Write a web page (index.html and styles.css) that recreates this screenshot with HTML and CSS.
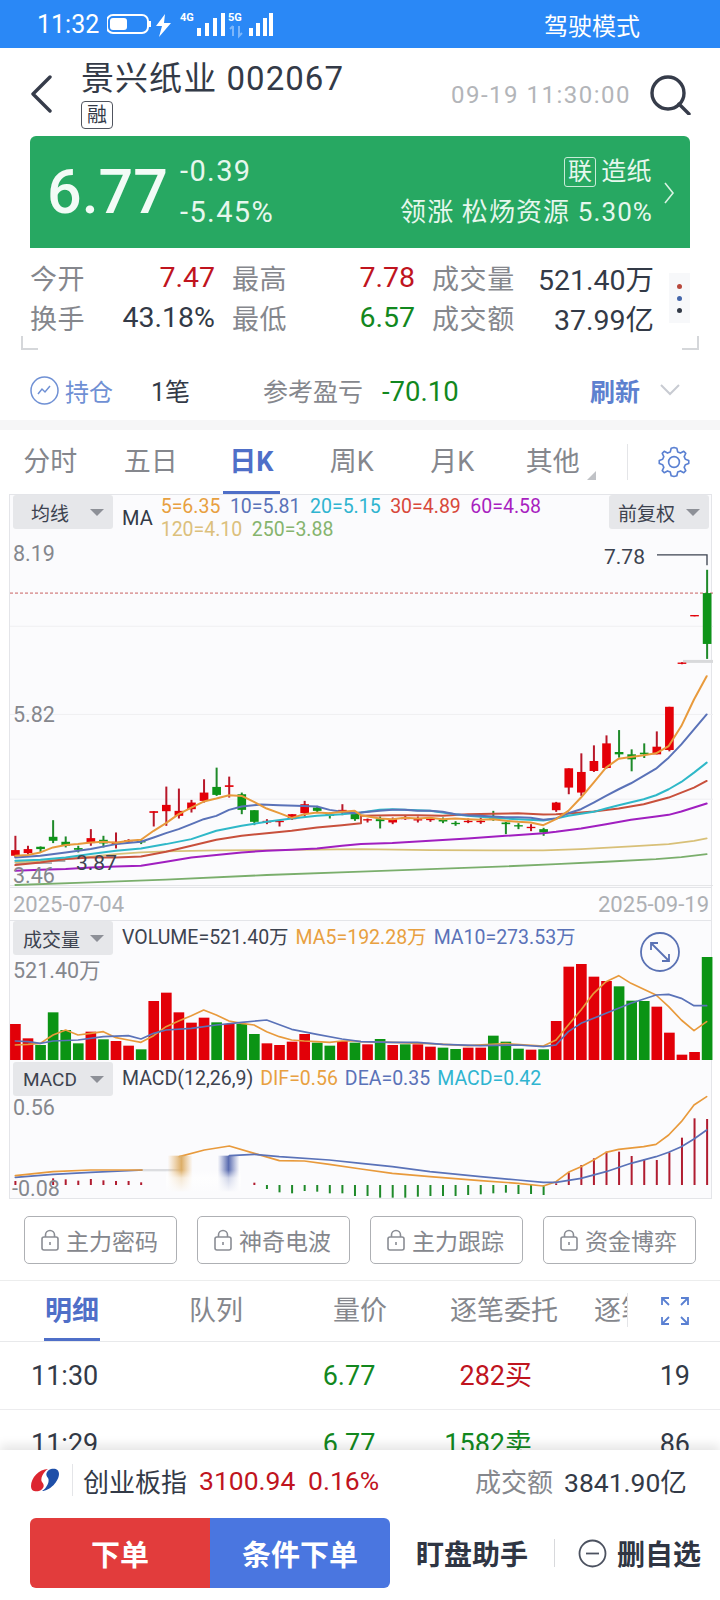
FILE: index.html
```html
<!DOCTYPE html>
<html lang="zh-CN">
<head>
<meta charset="utf-8">
<title>景兴纸业 002067</title>
<link rel="stylesheet" href="styles.css">
</head>
<body>
<div class="page">
  <div class="status">
    <span class="clock">11:32</span>
    <svg class="status-icons" width="170" height="30" viewBox="0 0 170 30">
      <rect x="0" y="5" width="41" height="18" rx="6" class="s-line"/>
      <rect x="3" y="8" width="17" height="12" rx="3" class="s-fill"/>
      <rect x="42" y="11" width="2" height="6" class="s-fill"/>
      <path d="M58 4 L49 16 H55 L52 27 L64 13 H57 Z" class="s-fill"/>
      <text x="73" y="11" class="s-tiny">4G</text>
      <rect x="90" y="18" width="4" height="8" class="s-fill"/><rect x="98" y="13" width="4" height="13" class="s-fill"/><rect x="106" y="8" width="4" height="18" class="s-fill"/><rect x="114" y="3" width="4" height="23" class="s-fill"/>
      <text x="121" y="11" class="s-tiny">5G</text>
      <path d="M126 26 V16 M123 19 L126 16 M132 16 V26 L135 23" class="s-dim"/>
      <rect x="142" y="18" width="4" height="8" class="s-fill"/><rect x="149" y="13" width="4" height="13" class="s-fill"/><rect x="156" y="8" width="4" height="18" class="s-fill"/><rect x="162" y="3" width="4" height="23" class="s-fill"/>
    </svg>
    <span class="drive">驾驶模式</span>
  </div>

  <header class="head">
    <svg class="back" width="24" height="38" viewBox="0 0 24 38"><path d="M21 2 L4 19 L21 36" class="ic-dark"/></svg>
    <div class="title-box">
      <div class="title">景兴纸业 002067</div>
      <span class="tag">融</span>
    </div>
    <span class="stamp">09-19 11:30:00</span>
    <svg class="search" width="42" height="40" viewBox="0 0 42 40"><circle cx="19" cy="18" r="16" class="ic-dark"/><path d="M30 29 L40 39" class="ic-dark"/></svg>
  </header>

  <section class="quote">
    <div class="price">6.77</div>
    <div class="changes"><span>-0.39</span><span>-5.45%</span></div>
    <div class="sector">
      <div class="sector-top"><span class="lian">联</span><span>造纸</span></div>
      <div class="sector-lead">领涨 松炀资源 5.30%</div>
    </div>
    <svg class="quote-arrow" width="12" height="22" viewBox="0 0 12 22"><path d="M2 1 L10 11 L2 21" class="ic-light"/></svg>
  </section>

  <section class="stats">
    <div class="stats-grid">
      <span class="lbl">今开</span><span class="val red">7.47</span>
      <span class="lbl pad">最高</span><span class="val red">7.78</span>
      <span class="lbl pad">成交量</span><span class="val">521.40万</span>
      <span class="lbl">换手</span><span class="val">43.18%</span>
      <span class="lbl pad">最低</span><span class="val green">6.57</span>
      <span class="lbl pad">成交额</span><span class="val">37.99亿</span>
    </div>
    <div class="dots"><i class="dot d1"></i><i class="dot d2"></i><i class="dot d3"></i></div>
    <i class="corner corner-l"></i><i class="corner corner-r"></i>
  </section>

  <section class="hold">
    <svg class="hold-ic" width="29" height="29" viewBox="0 0 29 29"><circle cx="14.5" cy="14.5" r="13.5" class="ic-blue"/><path d="M8 18 L12 13 L15 16 L20 10" class="ic-blue"/></svg>
    <span class="hold-name">持仓</span>
    <span class="hold-count">1笔</span>
    <span class="hold-label">参考盈亏</span>
    <span class="hold-pl">-70.10</span>
    <span class="refresh">刷新</span>
    <svg width="20" height="12" viewBox="0 0 20 12"><path d="M1 1 L10 10 L19 1" class="ic-pale"/></svg>
  </section>
  <div class="band"></div>

  <nav class="ktabs">
    <span class="ktab">分时</span><span class="ktab">五日</span><span class="ktab on">日K</span><span class="ktab">周K</span><span class="ktab">月K</span><span class="ktab more">其他</span>
    <i class="vline"></i>
    <svg class="gear" width="34" height="34" viewBox="0 0 24 24"><path class="ic-gear" d="M12 1.8 L14 2.3 L14.6 4.9 L16.6 5.7 L18.9 4.4 L20.3 5.9 L19.2 8.2 L20 10.1 L22.4 10.9 V13.1 L20 13.9 L19.2 15.8 L20.3 18.1 L18.9 19.6 L16.6 18.3 L14.6 19.1 L14 21.7 L12 22.2 L10 21.7 L9.4 19.1 L7.4 18.3 L5.1 19.6 L3.7 18.1 L4.8 15.8 L4 13.9 L1.6 13.1 V10.9 L4 10.1 L4.8 8.2 L3.7 5.9 L5.1 4.4 L7.4 5.7 L9.4 4.9 L10 2.3 Z"/><circle cx="12" cy="12" r="3.8" class="ic-gear"/></svg>
  </nav>

  <section class="chart">
    <div class="panel price-panel">
      <svg id="priceSvg" class="plot" viewBox="27 -108 2109 1179" preserveAspectRatio="none"></svg>
      <div class="chart-head">
        <span class="pick wide-pad">均线<i class="tri"></i></span>
        <span class="ma-name">MA</span>
        <div class="ma-list">
          <span class="c5">5=6.35</span><span class="c10">10=5.81</span><span class="c20">20=5.15</span><span class="c30">30=4.89</span><span class="c60">60=4.58</span><span class="c120">120=4.10</span><span class="c250">250=3.88</span>
        </div>
        <span class="pick right-pick">前复权<i class="tri"></i></span>
      </div>
      <span class="axis y819">8.19</span>
      <span class="axis y582">5.82</span>
      <span class="axis y346">3.46</span>
      <span class="low-mark">3.87</span>
      <span class="high-mark">7.78</span>
    </div>
    <div class="dates"><span>2025-07-04</span><span>2025-09-19</span></div>
    <div class="panel vol-panel">
      <svg id="volSvg" class="plot" viewBox="27 18 2109 423" preserveAspectRatio="none"></svg>
      <div class="sub-head">
        <span class="pick">成交量<i class="tri"></i></span>
        <span class="sub-text">VOLUME=521.40万</span>
        <span class="sub-text c5">MA5=192.28万</span>
        <span class="sub-text c10">MA10=273.53万</span>
      </div>
      <span class="axis v-top">521.40万</span>
      <svg class="zoom-btn" width="40" height="40" viewBox="0 0 40 40"><circle cx="20" cy="20" r="19" class="ic-zoom"/><path class="ic-zoom" d="M11 11 L29 29 M11 18 V11 H18 M29 22 V29 H22"/></svg>
    </div>
    <div class="panel macd-panel">
      <svg id="macdSvg" class="plot" viewBox="27 441 2109 411" preserveAspectRatio="none">
        <defs>
          <linearGradient id="fadeO" x1="0" x2="1" y1="0" y2="0"><stop offset="0" stop-color="#e9b670" stop-opacity="0"/><stop offset=".55" stop-color="#dcae68"/><stop offset="1" stop-color="#e9b670" stop-opacity="0"/></linearGradient>
          <linearGradient id="fadeB" x1="0" x2="1" y1="0" y2="0"><stop offset="0" stop-color="#6a7ab8" stop-opacity="0"/><stop offset=".5" stop-color="#5a6cb0"/><stop offset="1" stop-color="#6a7ab8" stop-opacity="0"/></linearGradient>
          <linearGradient id="fadeV" x1="0" x2="0" y1="0" y2="1"><stop offset="0" stop-color="#fff" stop-opacity="0"/><stop offset=".35" stop-color="#fff" stop-opacity=".7"/><stop offset="1" stop-color="#fbfbfd"/></linearGradient>
        </defs>
      </svg>
      <div class="sub-head">
        <span class="pick">MACD<i class="tri"></i></span>
        <span class="sub-text">MACD(12,26,9)</span>
        <span class="sub-text c5">DIF=0.56</span>
        <span class="sub-text c10">DEA=0.35</span>
        <span class="sub-text c20">MACD=0.42</span>
      </div>
      <span class="axis m-top">0.56</span>
      <span class="axis m-low">-0.08</span>
    </div>
  </section>

  <section class="locks">
    <span class="lock"><svg width="18" height="22" viewBox="0 0 18 22"><rect x="1" y="8" width="16" height="13" rx="2" class="ic-lock"/><path d="M4.5 8 V6 a4.5 4.5 0 0 1 9 0 V8 M9 13 V16" class="ic-lock"/></svg>主力密码</span>
    <span class="lock"><svg width="18" height="22" viewBox="0 0 18 22"><rect x="1" y="8" width="16" height="13" rx="2" class="ic-lock"/><path d="M4.5 8 V6 a4.5 4.5 0 0 1 9 0 V8 M9 13 V16" class="ic-lock"/></svg>神奇电波</span>
    <span class="lock"><svg width="18" height="22" viewBox="0 0 18 22"><rect x="1" y="8" width="16" height="13" rx="2" class="ic-lock"/><path d="M4.5 8 V6 a4.5 4.5 0 0 1 9 0 V8 M9 13 V16" class="ic-lock"/></svg>主力跟踪</span>
    <span class="lock"><svg width="18" height="22" viewBox="0 0 18 22"><rect x="1" y="8" width="16" height="13" rx="2" class="ic-lock"/><path d="M4.5 8 V6 a4.5 4.5 0 0 1 9 0 V8 M9 13 V16" class="ic-lock"/></svg>资金博弈</span>
  </section>

  <nav class="dtabs">
    <div class="dtab-track">
      <span class="dtab on">明细</span><span class="dtab">队列</span><span class="dtab">量价</span><span class="dtab">逐笔委托</span><span class="dtab last">逐笔成交</span>
    </div>
    <i class="vline dtab-div"></i>
    <svg class="expand" width="30" height="30" viewBox="0 0 30 30"><path class="ic-expand" d="M2 9 V2 H9 M2 2 L9 9 M28 9 V2 H21 M28 2 L21 9 M2 21 V28 H9 M2 28 L9 21 M28 21 V28 H21 M28 28 L21 21"/></svg>
  </nav>

  <div class="ticks">
    <div class="tick"><span>11:30</span><span class="green tc">6.77</span><span class="red tr">282买</span><span class="tr">19</span></div>
    <div class="tick"><span>11:29</span><span class="green tc">6.77</span><span class="green tr">1582卖</span><span class="tr">86</span></div>
  </div>

  <footer class="foot">
    <div class="index-row">
      <svg class="logo" width="30" height="28" viewBox="0 0 30 28">
        <path d="M18 3 C9 3 1 12 1 20 C1 25 5 26 9 25 C14 23 15 19 12 16 C10 13 13 6 18 3 Z" fill="#dc2630"/>
        <path d="M12 25 C20 25 29 15 29 8 C29 3 25 2 21 3 C16 5 15 9 18 12 C20 15 17 22 12 25 Z" fill="#1e4fa8"/>
      </svg>
      <i class="vline short"></i>
      <span class="ix-name">创业板指</span>
      <span class="ix-val red">3100.94</span>
      <span class="ix-pct red">0.16%</span>
      <span class="ix-lbl">成交额</span>
      <span class="ix-amt">3841.90亿</span>
    </div>
    <div class="action-row">
      <div class="orders"><button class="btn b-red">下单</button><button class="btn b-blue">条件下单</button></div>
      <span class="assist">盯盘助手</span>
      <i class="vline act"></i>
      <svg class="minus" width="29" height="29" viewBox="0 0 29 29"><circle cx="14.5" cy="14.5" r="13" class="ic-minus"/><path d="M8 14.5 H21" class="ic-minus"/></svg>
      <span class="assist del">删自选</span>
    </div>
  </footer>
</div>
<script src="chart.js"></script>
</body>
</html>
```
FILE: styles.css
```css
* { box-sizing: border-box; }
html, body { margin: 0; padding: 0; }
body { font-family: Roboto, "Noto Sans CJK SC", sans-serif; color: #333a47; background: #fff; }
.page { width: 720px; height: 1600px; overflow: hidden; display: flex; flex-direction: column; }
svg { display: block; flex: none; }
.red { color: #c0141e; }
.green { color: #12881e; }

.status { height: 48px; background: #2a88f6; color: #fff; display: flex; align-items: center; padding-left: 37px; flex: none; }
.clock { font-size: 25px; width: 70px; }
.status-icons { margin-top: 2px; }
.drive { font-size: 24px; margin-left: auto; margin-right: 80px; }
.s-line { fill: none; stroke: #fff; stroke-width: 2; }
.s-fill { fill: #fff; }
.s-dim { fill: none; stroke: #7db6fa; stroke-width: 2; }
.s-tiny { fill: #fff; font-size: 11px; font-weight: 700; font-family: Roboto, sans-serif; }

.ic-dark { fill: none; stroke: #363c4a; stroke-width: 3.4; stroke-linecap: round; stroke-linejoin: round; }
.ic-light { fill: none; stroke: #d8f2e2; stroke-width: 1.6; }
.ic-blue { fill: none; stroke: #6f90d4; stroke-width: 1.5; }
.ic-pale { fill: none; stroke: #c8cbd2; stroke-width: 2; }
.ic-gear { fill: none; stroke: #5a80d2; stroke-width: 1.15; stroke-linejoin: round; }
.ic-zoom { fill: none; stroke: #5a72b4; stroke-width: 1.8; }
.ic-lock { fill: none; stroke: #8a8d94; stroke-width: 1.6; }
.ic-expand { fill: none; stroke: #5a80d2; stroke-width: 1.8; }
.ic-minus { fill: none; stroke: #4c5260; stroke-width: 1.8; }

.head { height: 88px; flex: none; display: flex; align-items: flex-start; position: relative; padding-left: 29px; }
.back { margin-top: 27px; }
.title-box { margin-left: 28px; margin-top: 10px; display: flex; flex-direction: column; align-items: flex-start; }
.title { font-size: 33px; line-height: 42px; white-space: nowrap; letter-spacing: 1.05px; }
.tag { width: 32px; height: 28px; margin-top: 1px; border: 1px solid #50545e; border-radius: 4px; font-size: 20px; line-height: 26px; text-align: center; }
.stamp { margin-left: auto; margin-top: 33px; font-size: 24px; line-height: 28px; color: #b3b5b9; letter-spacing: 1.5px; }
.search { margin: 27px 29px 0 18px; }

.quote { margin: 0 30px; height: 112px; flex: none; background: #27a862; border-radius: 6px 6px 0 0; color: #e6f7ed; display: flex; align-items: center; padding-left: 17px; position: relative; }
.price { font-size: 61px; font-weight: 500; width: 133px; color: #f2fbf6; }
.changes { display: flex; flex-direction: column; font-size: 29px; line-height: 41px; letter-spacing: 1.4px; }
.sector { margin-left: auto; margin-right: 38px; display: flex; flex-direction: column; align-items: flex-end; font-size: 25px; line-height: 40px; letter-spacing: .4px; }
.sector-lead { font-size: 26px; letter-spacing: 1.1px; margin-right: -1px; }
.sector-top { display: flex; align-items: center; gap: 5px; }
.lian { width: 32px; height: 30px; border: 1px solid #c8ecd8; border-radius: 3px; font-size: 24px; line-height: 28px; text-align: center; }
.quote-arrow { position: absolute; right: 15px; top: 46px; }

.stats { height: 112px; flex: none; position: relative; padding: 9px 0 0 30px; }
.stats-grid { display: grid; grid-template-columns: 55px 130px 71px 129px 100px 139px; grid-auto-rows: 40px; align-items: center; }
.lbl { font-size: 27px; color: #85878d; letter-spacing: .6px; white-space: nowrap; }
.lbl.pad { padding-left: 17px; }
.val { font-size: 28.5px; text-align: right; white-space: nowrap; }
.dots { position: absolute; left: 669px; top: 25px; width: 21px; height: 50px; background: #f7f8fa; display: flex; flex-direction: column; align-items: center; justify-content: center; gap: 7px; }
.dot { width: 5px; height: 5px; border-radius: 50%; }
.d1 { background: #b8483c; } .d2 { background: #4466aa; } .d3 { background: #333a47; }
.corner { position: absolute; top: 88px; width: 17px; height: 14px; border-bottom: 2px solid #d5d7da; }
.corner-l { left: 21px; border-left: 2px solid #d5d7da; }
.corner-r { left: 682px; border-right: 2px solid #d5d7da; }

.hold { height: 60px; flex: none; display: flex; align-items: center; padding-left: 30px; }
.hold-name { font-size: 24px; color: #6f90d4; margin-left: 6px; width: 86px; }
.hold-count { font-size: 25px; width: 112px; }
.hold-label { font-size: 25px; color: #85878d; width: 119px; white-space: nowrap; }
.hold-pl { font-size: 27.5px; color: #12881e; width: 208px; line-height: 34px; padding-top: 3px; }
.refresh { font-size: 25px; font-weight: 700; color: #5d80cf; width: 70px; }
.band { height: 10px; background: #f6f6f7; flex: none; }

.ktabs { height: 64px; flex: none; display: flex; align-items: center; position: relative; }
.ktab { width: 100.5px; text-align: center; font-size: 27px; color: #85878d; line-height: 60px; height: 60px; }
.ktab.on { color: #4f6fc8; font-weight: 700; position: relative; }
.ktab.on::after { content: ""; position: absolute; left: 22px; right: 22px; top: 59px; height: 3px; background: #4f6fc8; }
.ktab.more { position: relative; }
.ktab.more::after { content: ""; position: absolute; left: 84px; top: 39px; width: 0; height: 0; border-left: 9px solid transparent; border-bottom: 9px solid #c0c2c6; }
.vline { display: block; flex: none; width: 1px; background: #e4e5e8; }
.ktabs .vline { height: 36px; margin-left: 24px; }
.gear { margin-left: 29px; }

.chart { flex: none; }
.panel { position: relative; margin: 0 8px 0 9px; border: solid #e4e5e9; border-width: 0 1px; background: #fbfbfd; width: 703px; }
.plot { position: absolute; left: 0; top: 0; width: 703px; height: 100%; }
.price-panel { height: 393px; border-top-width: 1px; }
.price-panel .plot { top: -1px; }
.dates { margin: 0 8px 0 9px; width: 703px; height: 34px; display: flex; justify-content: space-between; padding: 0 2px 0 3px; align-items: center; font-size: 22px; color: #aeb0b4; border: solid #e4e5e9; border-width: 1px; background: #fdfdfe; }
.vol-panel { height: 141px; }
.macd-panel { height: 137px; border-bottom-width: 1px; }
.macd-panel .plot { height: 137px; }

.chart-head { position: relative; display: flex; align-items: flex-start; }
.pick { flex: none; width: 100px; height: 34px; margin-left: 3px; background: #e6e7ea; border-radius: 3px; display: flex; align-items: center; padding-left: 10px; font-size: 19px; color: #3d4350; position: relative; white-space: nowrap; }
.pick.wide-pad { padding-left: 18px; }
.tri { position: absolute; right: 9px; top: 14px; width: 0; height: 0; border: 7px solid transparent; border-top: 7px solid #8d9097; border-bottom: 0; }
.ma-name { font-size: 20px; margin: 11px 0 0 9px; }
.ma-list { width: 420px; margin-left: 8px; display: flex; flex-wrap: wrap; gap: 0 9.5px; font-size: 19.5px; line-height: 23px; white-space: nowrap; }
.right-pick { position: absolute; left: 596px; padding-left: 9px; }
.c5 { color: #e8a040; } .c10 { color: #5a72b8; } .c20 { color: #2fb4d0; } .c30 { color: #d8483a; } .c60 { color: #a81fc0; } .c120 { color: #dcc07c; } .c250 { color: #86b46e; }
.axis { position: absolute; left: 3px; font-size: 21.5px; line-height: 24px; color: #85878d; }
.y819 { top: 47px; } .y582 { top: 208px; } .y346 { top: 369px; }
.v-top { top: 38px; } .m-top { top: 34px; } .m-low { top: 115px; left: 2px; }
.low-mark { position: absolute; left: 66px; top: 356px; font-size: 21px; line-height: 24px; color: #3d4350; }
.high-mark { position: absolute; left: 594px; top: 50px; font-size: 21px; line-height: 24px; color: #3d4350; }
.sub-head { position: relative; display: flex; align-items: flex-start; gap: 7px; }
.sub-head .pick { margin-right: 2px; }
.sub-text { font-size: 19.5px; line-height: 34px; color: #3d4350; white-space: nowrap; }
.sub-text.c5 { color: #e8a040; } .sub-text.c10 { color: #5a72b8; } .sub-text.c20 { color: #2fb4d0; }
.zoom-btn { position: absolute; left: 630px; top: 11px; }

.locks { flex: none; margin-top: 17px; height: 48px; padding-left: 24px; display: flex; gap: 20px; }
.lock { width: 153px; height: 48px; border: 1px solid #aeb0b4; border-radius: 5px; display: flex; align-items: center; padding-left: 16px; gap: 7px; font-size: 23px; color: #85878d; }

.dtabs { flex: none; margin-top: 16px; height: 62px; border-top: 1px solid #eceded; border-bottom: 1px solid #e8e9eb; display: flex; position: relative; }
.dtab-track { width: 627px; display: flex; height: 52px; margin-top: 4px; clip-path: inset(0 0 -20px 0); }
.dtab { flex: none; width: 144px; text-align: center; font-size: 27px; line-height: 52px; color: #85878d; height: 52px; white-space: nowrap; }
.dtab.last { text-align: left; padding-left: 18px; width: 120px; }
.dtab.on { color: #4f6fc8; font-weight: 700; position: relative; }
.dtab.on::after { content: ""; position: absolute; left: 44px; width: 56px; height: 3px; top: 53px; background: #4f6fc8; }
.dtab-div { height: 34px; margin-top: 12px; }
.expand { margin: 15px 0 0 32px; }

.ticks { flex: 1; min-height: 0; overflow: hidden; }
.tick { height: 68px; border-bottom: 1px solid #ececee; display: grid; grid-template-columns: 288px 60px 153px 158px; align-items: center; padding-left: 31px; font-size: 27px; line-height: 38px; }
.tick span { padding-top: 1px; }
.tc { text-align: center; }
.tr { text-align: right; white-space: nowrap; }

.foot { flex: none; height: 150px; background: #fff; box-shadow: 0 -5px 10px rgba(0,0,0,.1); position: relative; }
.index-row { height: 60px; margin-bottom: 8px; display: flex; align-items: center; padding-left: 30px; font-size: 26.5px; }
.index-row .short { height: 32px; margin-left: 12px; }
.ix-name { margin-left: 10px; width: 116px; font-size: 26px; white-space: nowrap; }
.ix-val { width: 109px; }
.ix-pct { width: 167px; }
.ix-lbl { font-size: 26px; color: #85878d; width: 89px; white-space: nowrap; }
.ix-amt { white-space: nowrap; }
.action-row { display: flex; align-items: center; padding-left: 30px; }
.orders { display: flex; border-radius: 6px; overflow: hidden; height: 70px; }
.btn { width: 180px; height: 70px; border: 0; padding: 0; color: #fff; font-family: inherit; font-weight: 700; font-size: 29px; }
.b-red { background: #e23c3c; }
.b-blue { background: #4a76e0; }
.assist { font-size: 28px; font-weight: 700; color: #2f3543; white-space: nowrap; margin-left: 26px; }
.vline.act { height: 28px; margin-left: 26px; background: #d8d9dc; }
.minus { margin-left: 23px; }
.assist.del { margin-left: 10px; }
```
FILE: chart.js
```js
var NS = "http://www.w3.org/2000/svg";
function el(parent, tag, attrs) {
  var e = document.createElementNS(NS, tag);
  for (var k in attrs) e.setAttribute(k, attrs[k]);
  parent.appendChild(e);
  return e;
}
function rx(i) { return 43.2 + i * 37.73; }
function line(svg, color, pts, w) {
  el(svg, "polyline", { points: pts.map(function (p) { return p.join(","); }).join(" "), fill: "none", stroke: color, "stroke-width": w, "stroke-linejoin": "round", "stroke-linecap": "round" });
}
// right-half coordinates were read from a crop beginning at zoom x = 1080
function R(pts) { return pts.map(function (p) { return [p[0] + 1080, p[1]]; }); }

var RED = "#e40008", GRN = "#0e9418", RW = "#b8182a", GW = "#1f8a2a";

var candles = [
 ["r",920,985,963,980],["r",950,975,960,972],["g",952,970,953,960],["g",873,942,923,935],["g",922,955,938,950],
 ["g",950,970,957,962],["r",900,950,927,942],["g",920,955,932,943],["r",910,958,938,945],["r",930,942,933,936],
 ["g",932,945,936,938],["r",846,892,846,851],["r",772,890,827,846],["r",778,868,845,860],["r",812,850,820,840],
 ["r",750,820,790,815],["g",715,800,773,797],["r",742,805,768,773],["g",790,855,795,842],["g",843,888,843,878],
 ["r",870,885,875,880],["r",875,892,875,878],["r",855,872,855,870],["r",815,862,825,852],["g",830,850,835,845],
 ["g",850,868,855,860],["r",825,858,842,850],["g",845,875,853,870],["r",868,880,870,874],["g",862,898,870,876],
 ["r",865,885,870,880],["r",860,872,866,868],["r",862,880,870,873],["r",865,878,868,873],["g",865,882,872,877],
 ["g",876,890,881,885],["r",868,882,875,879],["r",865,884,875,878],["g",845,875,868,870],["g",878,915,880,885],
 ["g",882,900,888,892],["r",885,906,893,897],["g",896,920,900,910],["r",818,848,820,843],["r",717,795,717,775],
 ["r",672,800,728,790],["r",648,728,695,725],["r",618,718,642,716],["g",602,685,668,675],["g",660,726,675,690],
 ["g",642,686,670,675],["r",606,675,652,675],["r",532,666,532,662],["r",398,404,399,403],["r",256,260,256,260],
 ["g",120,388,190,343]
];

var price = document.getElementById("priceSvg");
[[190,"#c96060","9 6"],[290,"#efeff2",""],[555,"#efeff2",""],[810,"#efeff2",""],[1070,"#e0e1e4",""]].forEach(function (g) {
  el(price, "line", { x1: 27, x2: 2136, y1: g[0], y2: g[0], stroke: g[1], "stroke-width": 3, "stroke-dasharray": g[2] });
});
el(price, "rect", { x: 2046, y: 391, width: 90, height: 9, fill: "#d8d9db" });
candles.forEach(function (c, i) {
  var x = rx(i), up = c[0] === "r";
  el(price, "rect", { x: x - 3, y: c[1], width: 6, height: c[2] - c[1], fill: up ? RW : GW });
  el(price, "rect", { x: x - 13, y: c[3], width: 26, height: Math.max(c[4] - c[3], 4), fill: up ? RED : GRN });
});
// grey short overlay at the left end of the MAs
el(price, "rect", { x: 43, y: 993, width: 150, height: 5, fill: "#8f9499" });
el(price, "rect", { x: 43, y: 1000, width: 110, height: 4, fill: "#8f9499" });

line(price, "#7aae6c", [[43,1068],[269,1060],[495,1052],[797,1038],[1080,1028]].concat(R([[207,1020],[434,1012],[585,1005],[735,998],[885,990],[961,984],[1037,975]])), 5.5);
line(price, "#d8c078", [[43,1000],[118,995],[194,990],[345,975],[420,970],[495,967],[646,964],[797,963],[1080,960]].concat(R([[207,963],[396,964],[547,964],[660,960],[810,952],[923,945],[999,935],[1037,928]])), 5.5);
line(price, "#a01fc0", [[43,1025],[118,1022],[194,1020],[269,1015],[345,1012],[420,1010],[495,998],[571,985],[646,978],[722,970],[797,965],[872,962],[948,958],[1023,950],[1080,945]].concat(R([[94,942],[207,935],[320,928],[434,920],[547,912],[585,908],[660,898],[735,885],[810,872],[885,862],[923,857],[961,847],[999,835],[1037,823]])), 6);
line(price, "#c8503c", [[43,1008],[118,1000],[194,990],[269,985],[345,985],[420,982],[495,968],[571,950],[646,932],[722,920],[797,912],[872,905],[948,895],[1023,888],[1080,882]].concat(R([[0,860],[94,858],[169,858],[245,860],[320,855],[396,854],[471,852],[547,856],[585,855],[622,853],[698,847],[773,838],[848,825],[923,805],[961,790],[999,775],[1037,755]])), 6);
line(price, "#2fb8c8", [[43,995],[118,992],[194,985],[269,975],[345,965],[420,958],[495,945],[571,930],[646,905],[722,890],[797,878],[872,868],[948,860],[1023,855],[1080,850]].concat(R([[56,842],[94,840],[131,842],[207,845],[283,855],[320,860],[396,866],[471,870],[547,874],[585,868],[622,860],[698,848],[735,838],[773,828],[848,810],[885,798],[923,780],[961,758],[999,730],[1037,700]])), 6);
line(price, "#5a72b8", [[43,985],[118,980],[194,970],[269,960],[345,945],[420,938],[458,925],[495,912],[533,900],[571,885],[608,870],[646,860],[684,842],[722,832],[780,826],[835,828],[885,830],[948,832],[986,842],[1023,848],[1061,852],[1080,850]].concat(R([[56,845],[94,842],[131,842],[169,845],[207,845],[245,848],[283,855],[320,858],[358,860],[396,862],[434,864],[471,864],[509,866],[547,872],[585,868],[622,852],[660,840],[698,820],[735,800],[773,780],[810,762],[848,740],[885,718],[923,685],[961,645],[999,600],[1037,555]])), 6);
line(price, "#e89a3c", [[43,980],[80,978],[118,970],[156,955],[194,948],[231,945],[269,940],[307,938],[345,941],[382,935],[420,932],[458,905],[495,882],[533,855],[571,835],[608,817],[646,808],[684,798],[722,800],[759,818],[797,838],[835,852],[872,866],[910,855],[948,850],[986,852],[1023,848],[1061,845],[1080,858]].concat(R([[56,868],[94,870],[131,866],[169,868],[207,866],[245,870],[283,868],[320,870],[358,872],[396,870],[434,875],[471,878],[509,880],[547,888],[585,870],[622,845],[660,805],[698,760],[735,715],[773,688],[810,683],[848,678],[885,672],[923,650],[961,590],[999,510],[1037,440]])), 6);
// leader of the high-price marker
el(price, "polyline", { points: "1968,75 2118,75 2118,106", fill: "none", stroke: "#3d4350", "stroke-width": 4 });

var vols = [
 ["r",327],["r",370],["g",390],["g",292],["g",345],["g",385],["r",350],["g",373],["r",378],["r",392],
 ["g",403],["r",258],["r",233],["r",292],["r",323],["r",308],["g",322],["r",327],["g",327],["g",357],
 ["r",385],["r",390],["r",380],["r",357],["g",383],["g",392],["r",378],["g",383],["r",388],["g",372],
 ["r",390],["g",388],["r",388],["r",395],["g",398],["g",402],["r",398],["r",398],["g",362],["g",380],
 ["g",401],["r",404],["g",403],["r",318],["r",155],["r",147],["r",185],["r",198],["g",214],["g",257],
 ["g",258],["r",275],["r",353],["r",419],["r",411],["g",126]
];
var vol = document.getElementById("volSvg");
vols.forEach(function (v, i) {
  el(vol, "rect", { x: rx(i) - 16, y: v[1], width: 32, height: 435 - v[1], fill: v[0] === "r" ? "#e20008" : "#0b9414" });
});
line(vol, "#e89a3c", [[43,390],[81,388],[118,385],[156,360],[194,345],[231,360],[269,355],[307,350],[345,368],[382,375],[420,382],[458,362],[495,335],[533,318],[571,302],[608,285],[646,300],[684,318],[722,325],[759,330],[797,350],[835,365],[872,375],[910,378],[948,380],[986,382],[1023,378],[1061,378],[1080,380]].concat(R([[94,382],[207,386],[320,392],[434,386],[547,393],[585,375],[622,330],[660,285],[698,235],[735,200],[773,182],[810,205],[885,240],[923,275],[961,315],[999,347],[1037,320]])), 5);
line(vol, "#5a72b8", [[43,378],[81,380],[118,385],[156,378],[231,375],[307,365],[382,362],[420,372],[458,355],[495,345],[571,340],[646,330],[722,322],[797,315],[872,343],[948,358],[1023,372],[1080,380]].concat(R([[94,382],[169,382],[245,388],[358,392],[471,390],[547,395],[585,390],[622,350],[660,325],[735,295],[810,265],[885,240],[923,238],[961,250],[999,272],[1037,272]])), 5);

var macd = document.getElementById("macdSvg");
var ZERO = 810;
[[0,798],[3,790],[4,793],[5,797],[6,792],[7,796],[8,798],[9,798],[10,802],[19,803],
 [43,805],[44,772],[45,750],[46,730],[47,710],[48,710],[49,723],[50,733],[51,735],[52,712],[53,668],[54,610],[55,612]].forEach(function (b) {
  el(macd, "rect", { x: rx(b[0]) - 3, y: b[1], width: 6, height: ZERO - b[1], fill: "#b01c30" });
});
[[20,822],[21,832],[22,835],[23,828],[24,830],[25,835],[26,835],[27,843],[28,843],[29,848],[30,848],[31,848],[32,845],[33,843],[34,843],[35,843],[36,840],[37,838],[38,835],[39,833],[40,837],[41,837],[42,840]].forEach(function (b) {
  el(macd, "rect", { x: rx(b[0]) - 3, y: ZERO, width: 6, height: b[1] - ZERO, fill: "#1f8a2a" });
});
// the reference has a blurred patch over the middle of these lines
line(macd, "#5a72b8", [[43,787],[156,778],[269,772],[430,765]], 5);
line(macd, "#e89a3c", [[43,782],[156,770],[269,765],[430,765]], 5);
line(macd, "#e89a3c", [[535,725],[610,705],[685,693],[760,715],[835,737],[910,738],[985,748],[1080,762]].concat(R([[94,775],[207,785],[358,797],[471,805],[547,813],[585,800],[622,772],[660,755],[698,735],[735,712],[773,703],[848,695],[885,688],[923,660],[961,620],[999,570],[1037,545]])), 5);
line(macd, "#5a72b8", [[685,722],[760,718],[835,725],[985,735],[1080,745]].concat(R([[94,755],[207,770],[358,785],[471,795],[547,802],[585,802],[660,790],[735,770],[810,745],[885,725],[923,712],[961,695],[999,672],[1037,645]])), 5);
el(macd, "rect", { x: 425, y: 762, width: 120, height: 7, fill: "#dcdde0" });
el(macd, "rect", { x: 500, y: 722, width: 75, height: 108, fill: "url(#fadeO)" });
el(macd, "rect", { x: 650, y: 722, width: 65, height: 108, fill: "url(#fadeB)" });
el(macd, "rect", { x: 495, y: 765, width: 225, height: 68, fill: "url(#fadeV)" });
```
